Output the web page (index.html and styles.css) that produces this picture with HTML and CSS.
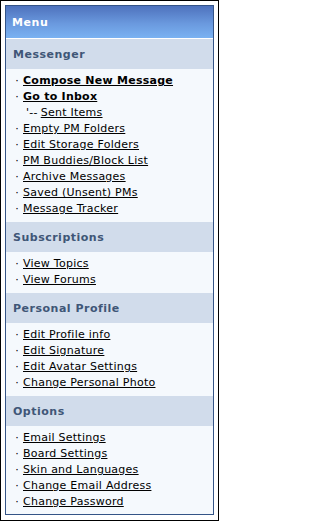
FILE: index.html
```html
<!DOCTYPE html>
<html>
<head>
<meta charset="utf-8">
<title>Menu</title>
<link rel="stylesheet" href="styles.css">
</head>
<body>
<div class="frame">
  <div class="menu">
    <div class="menu-title">Menu</div>
    <div class="section">
      <div class="section-title">Messenger</div>
      <ul class="links">
        <li><span class="dot">·</span><a class="strong" href="#">Compose New Message</a></li>
        <li><span class="dot">·</span><a class="strong" href="#">Go to Inbox</a></li>
        <li class="sub"><span class="prefix">'--</span><a href="#">Sent Items</a></li>
        <li><span class="dot">·</span><a href="#">Empty PM Folders</a></li>
        <li><span class="dot">·</span><a href="#">Edit Storage Folders</a></li>
        <li><span class="dot">·</span><a href="#">PM Buddies/Block List</a></li>
        <li><span class="dot">·</span><a href="#">Archive Messages</a></li>
        <li><span class="dot">·</span><a href="#">Saved (Unsent) PMs</a></li>
        <li><span class="dot">·</span><a href="#">Message Tracker</a></li>
      </ul>
    </div>
    <div class="section">
      <div class="section-title">Subscriptions</div>
      <ul class="links">
        <li><span class="dot">·</span><a href="#">View Topics</a></li>
        <li><span class="dot">·</span><a href="#">View Forums</a></li>
      </ul>
    </div>
    <div class="section">
      <div class="section-title">Personal Profile</div>
      <ul class="links">
        <li><span class="dot">·</span><a href="#">Edit Profile info</a></li>
        <li><span class="dot">·</span><a href="#">Edit Signature</a></li>
        <li><span class="dot">·</span><a href="#">Edit Avatar Settings</a></li>
        <li><span class="dot">·</span><a href="#">Change Personal Photo</a></li>
      </ul>
    </div>
    <div class="section">
      <div class="section-title">Options</div>
      <ul class="links">
        <li><span class="dot">·</span><a href="#">Email Settings</a></li>
        <li><span class="dot">·</span><a href="#">Board Settings</a></li>
        <li><span class="dot">·</span><a href="#">Skin and Languages</a></li>
        <li><span class="dot">·</span><a href="#">Change Email Address</a></li>
        <li><span class="dot">·</span><a href="#">Change Password</a></li>
      </ul>
    </div>
  </div>
</div>
</body>
</html>
```
FILE: styles.css
```css
html, body {
  margin: 0;
  padding: 0;
  background: #ffffff;
}
body {
  font-family: "DejaVu Sans", Verdana, sans-serif;
  font-size: 11px;
  letter-spacing: 0.25px;
}
.frame {
  width: 209px;
  height: 511px;
  border: 1px solid #000000;
  padding: 4px;
  background: #ffffff;
}
.menu {
  border: 1px solid #345487;
  background: #f5f9fd;
  height: 508px;
  overflow: hidden;
}
.menu-title {
  height: 32px;
  line-height: 33px;
  padding-left: 6px;
  color: #ffffff;
  font-weight: bold;
  font-size: 11px;
  letter-spacing: 0.6px;
  background: linear-gradient(to bottom, #4e72bd 0%, #6a99de 55%, #7ab2f2 100%);
  border-bottom: 1px solid #ffffff;
}
.section-title {
  height: 30px;
  line-height: 31px;
  padding-left: 7px;
  background: #d1dceb;
  color: #3f5677;
  font-weight: bold;
  font-size: 11px;
  letter-spacing: 0.5px;
}
.links {
  list-style: none;
  margin: 0;
  padding: 4px 0 5px 0;
}
.links li {
  height: 16px;
  line-height: 16px;
  display: flex;
  align-items: center;
  white-space: nowrap;
}
.dot {
  width: 17px;
  text-align: right;
  padding-right: 4px;
  box-sizing: border-box;
  color: #000000;
}
.prefix {
  padding-left: 20px;
  padding-right: 3px;
  color: #000000;
}
.links a {
  color: #000000;
  text-decoration: underline;
}
.links a.strong {
  font-weight: bold;
}
```
